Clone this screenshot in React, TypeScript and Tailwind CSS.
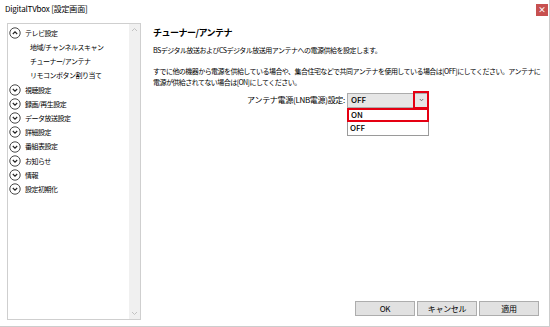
import * as React from 'react'

const JP = '"Noto Sans CJK JP", "Noto Sans", sans-serif'

const Toggle: React.FC<{open?: boolean}> = ({open}) => (
  <svg width="12" height="12" viewBox="0 0 12 12" className="shrink-0">
    <circle cx="6" cy="6" r="5.2" fill="white" stroke="#333" strokeWidth="0.9" />
    {open ? (
      <path d="M3.8 7 L6 4.8 L8.2 7" fill="none" stroke="#222" strokeWidth="1.1" />
    ) : (
      <path d="M3.8 5 L6 7.2 L8.2 5" fill="none" stroke="#222" strokeWidth="1.1" />
    )}
  </svg>
)

const groups = ['視聴設定', '録画/再生設定', 'データ放送設定', '詳細設定', '番組表設定', 'お知らせ', '情報', '設定初期化']
const children = ['地域/チャンネルスキャン', 'チューナー/アンテナ', 'リモコンボタン割り当て']

const Tree: React.FC = () => (
  <div className="ml-[7px] flex h-[297px] w-[134px] shrink-0 border border-[#cfcfcf] bg-white">
    <div className="flex flex-1 flex-col pl-[1px] pt-[2px] text-[7px] tracking-[-0.5px]">
      <div className="flex h-[14.2px] items-center gap-[4px]">
        <Toggle open />
        <span>テレビ設定</span>
      </div>
      {children.map((c) => (
        <div key={c} className="flex h-[14.2px] items-center pl-[21px]">
          {c}
        </div>
      ))}
      {groups.map((g) => (
        <div key={g} className="flex h-[14.2px] items-center gap-[4px]">
          <Toggle />
          <span>{g}</span>
        </div>
      ))}
    </div>
    <div className="flex w-[11px] flex-col items-center justify-between bg-[#f0f0f0] py-[3px]">
      <svg width="7" height="5" viewBox="0 0 7 5">
        <path d="M1 4 L3.5 1.5 L6 4" fill="none" stroke="#c2c2c2" strokeWidth="1" />
      </svg>
      <svg width="7" height="5" viewBox="0 0 7 5">
        <path d="M1 1 L3.5 3.5 L6 1" fill="none" stroke="#c2c2c2" strokeWidth="1" />
      </svg>
    </div>
  </div>
)

const Btn: React.FC<{label: string}> = ({label}) => (
  <button className="flex h-[15px] w-[60px] items-center justify-center border border-[#adadad] bg-[#e1e1e1] text-[8px] tracking-[-0.3px]">
    {label}
  </button>
)

const AntennaSelect: React.FC = () => (
  <div className="relative h-[15px] w-[82px] shrink-0">
    <div className="flex h-full items-center border border-[#acacac] bg-[#e6e6e6] pl-[3px] text-[8px] font-medium">
      OFF
    </div>
    {/* highlighted arrow */}
    <div className="absolute left-[66px] top-[-2px] flex h-[18px] w-[16px] items-center justify-center border-2 border-[#e50012]">
      <svg width="5" height="4" viewBox="0 0 5 4">
        <path d="M0.8 1 L2.5 2.8 L4.2 1" fill="none" stroke="#666" strokeWidth="0.9" />
      </svg>
    </div>
    {/* open list */}
    <div className="absolute left-0 top-[16px] w-[82px] border border-[#9a9a9a] bg-white text-[8px] font-medium">
      <div className="-ml-px -mr-px -mt-[2px] flex h-[14px] items-center border-2 border-[#e50012] pl-[2px]">ON</div>
      <div className="flex h-[13px] items-center pl-[2px]">OFF</div>
    </div>
  </div>
)

export default function App() {
  return (
    <div
      className="flex h-[327px] w-[550px] flex-col border-b border-r border-[#cdcdcd] bg-white text-black"
      style={{fontFamily: JP}}
    >
      <div className="flex h-[23px] items-start justify-between pl-[5px] pr-[1px] pt-[3px]">
        <span className="text-[8px] leading-[12px] tracking-[-0.2px]">DigitalTVbox [設定画面]</span>
        <div className="mt-[1px] flex h-[12px] w-[12px] items-center justify-center bg-[#c75050] text-[8px] font-bold leading-none text-white">
          ×
        </div>
      </div>
      <div className="flex flex-1">
        <Tree />
        <div className="flex min-w-0 flex-1 flex-col pl-[12px] pr-[10px]">
          <div className="mt-[4px] h-[12px] text-[9px] font-bold leading-[12px] tracking-[-0.5px]">
            チューナー/アンテナ
          </div>
          <div className="mt-[6px] text-[7px] leading-[11px] tracking-[-0.5px]">
            BSデジタル放送およびCSデジタル放送用アンテナへの電源供給を設定します。
          </div>
          <div className="mt-[10px] whitespace-nowrap text-[7px] leading-[11px] tracking-[-0.55px]">
            すでに他の機器から電源を供給している場合や、集合住宅などで共同アンテナを使用している場合は[OFF]にしてください。アンテナに
            <br />
            電源が供給されてない場合は[ON]にしてください。
          </div>
          <div className="mt-[4px] flex h-[16px] items-center">
            <div className="mr-[2px] w-[192px] shrink-0 text-right text-[8px] tracking-[-0.3px]">
              アンテナ電源(LNB電源)設定:
            </div>
            <AntennaSelect />
          </div>
          <div className="mb-[10px] mt-auto flex justify-end gap-[2px]">
            <Btn label="OK" />
            <Btn label="キャンセル" />
            <Btn label="適用" />
          </div>
        </div>
      </div>
    </div>
  )
}
